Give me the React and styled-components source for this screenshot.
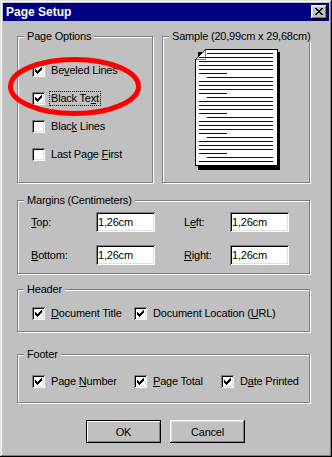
import React from 'react';
import styled, { createGlobalStyle } from 'styled-components';

const Global = createGlobalStyle`
  html, body { margin: 0; padding: 0; background: #c0c0c0; }
  body {
    font-family: "Liberation Sans", Arial, sans-serif;
    font-size: 11px;
    letter-spacing: -0.2px;
    color: #000;
  }
  * { box-sizing: border-box; }
`;

const Window = styled.div`
  position: relative;
  width: 332px;
  height: 457px;
  background: #c0c0c0;
  padding: 3px;
  display: flex;
  flex-direction: column;
  box-shadow: inset -1px -1px #000, inset 1px 1px #dfdfdf,
    inset -2px -2px #808080, inset 2px 2px #fff;
`;

const TitleBar = styled.div`
  flex: none;
  height: 18px;
  background: #000080;
  color: #fff;
  display: flex;
  align-items: center;
  justify-content: space-between;
  padding: 0 2px 0 3px;
`;

const TitleText = styled.span`
  font-weight: bold;
  font-size: 12px;
  letter-spacing: 0;
`;

const CloseButton = styled.div`
  width: 16px;
  height: 14px;
  background: #c0c0c0;
  display: flex;
  align-items: flex-start;
  justify-content: flex-start;
  padding: 3px 0 0 4px;
  box-shadow: inset -1px -1px #000, inset 1px 1px #fff,
    inset -2px -2px #808080, inset 2px 2px #dfdfdf;
`;

const Content = styled.div`
  flex: none;
  display: flex;
  flex-direction: column;
  padding: 15px 19px 0 14px;
`;

const TopRow = styled.div`
  display: flex;
  gap: 9px;
`;

const Group = styled.div`
  position: relative;
  flex: ${(p) => (p.$grow ? '1 1 0' : 'none')};
  border: 1px solid #808080;
  box-shadow: inset 1px 1px #fff, 1px 1px #fff;
  height: ${(p) => p.$h}px;
  width: ${(p) => (p.$w ? `${p.$w}px` : 'auto')};
  margin-top: ${(p) => p.$mt || 0}px;
`;

const Legend = styled.span`
  position: absolute;
  top: -7px;
  left: 6px;
  padding: 0 3px;
  line-height: 13px;
  background: #c0c0c0;
  white-space: nowrap;
`;

const OptionList = styled.div`
  display: flex;
  flex-direction: column;
  gap: 13px;
  padding: 26px 0 0 14px;
`;

const CheckRow = styled.div`
  display: flex;
  align-items: center;
  gap: 4px;
  height: 15px;
`;

const Box = styled.span`
  flex: none;
  width: 13px;
  height: 13px;
  background: #fff;
  display: flex;
  align-items: center;
  justify-content: center;
  box-shadow: inset 1px 1px #808080, inset -1px -1px #fff,
    inset 2px 2px #000, inset -2px -2px #dfdfdf;
`;

const Label = styled.span`
  line-height: 13px;
  padding: 0 1px;
  border: 1px dotted ${(p) => (p.$focus ? '#000' : 'transparent')};
  white-space: nowrap;
`;

const Acc = styled.span`
  text-decoration: underline;
  text-underline-offset: 1px;
`;

const SampleArea = styled.div`
  display: flex;
  justify-content: center;
  padding: 12px 0 0 4px;
`;

const MarginGrid = styled.div`
  display: grid;
  grid-template-columns: 65px 59px 29px 46px 59px;
  grid-auto-rows: 20px;
  row-gap: 13px;
  align-items: center;
  padding: 11px 0 0 13px;
`;

const FieldLabel = styled.span`
  grid-column: ${(p) => p.$col};
  white-space: nowrap;
`;

const Field = styled.input`
  grid-column: ${(p) => p.$col};
  width: 59px;
  height: 20px;
  border: none;
  outline: none;
  margin: 0;
  padding: 0 0 0 2px;
  background: #fff;
  font: inherit;
  letter-spacing: inherit;
  color: #000;
  box-shadow: inset 1px 1px #808080, inset -1px -1px #fff,
    inset 2px 2px #000, inset -2px -2px #dfdfdf;
`;

const CheckGrid = styled.div`
  display: grid;
  grid-template-columns: 102px 87px auto;
  padding: ${(p) => p.$pt}px 0 0 14px;
`;

const ButtonRow = styled.div`
  display: flex;
  justify-content: center;
  gap: 9px;
  padding-left: 4px;
  margin-top: 17px;
`;

const Button = styled.div`
  width: 75px;
  height: 23px;
  display: flex;
  align-items: center;
  justify-content: center;
  background: #c0c0c0;
  border: ${(p) => (p.$default ? '1px solid #000' : 'none')};
  box-shadow: ${(p) =>
    p.$default
      ? 'inset 1px 1px #fff, inset -1px -1px #808080'
      : 'inset -1px -1px #000, inset 1px 1px #fff, inset -2px -2px #808080, inset 2px 2px #dfdfdf'};
`;

const Ellipse = styled.svg`
  position: absolute;
  left: 8px;
  top: 57px;
  pointer-events: none;
`;

const XGlyph = () => {
  const rows = ['11000011', '01100110', '00111100', '00011000', '00111100', '01100110', '11000011'];
  return (
    <svg width="8" height="7" viewBox="0 0 8 7" shapeRendering="crispEdges">
      {rows.map((r, y) =>
        r.split('').map((c, x) => (c === '1' ? <rect key={`${x}-${y}`} x={x} y={y} width="1" height="1" fill="#000" /> : null))
      )}
    </svg>
  );
};

const CheckMark = () => {
  const rows = ['0000001', '0000011', '1000111', '1101110', '1111100', '0111000', '0010000'];
  return (
    <svg width="7" height="7" viewBox="0 0 7 7" shapeRendering="crispEdges">
      {rows.map((r, y) =>
        r.split('').map((c, x) => (c === '1' ? <rect key={`${x}-${y}`} x={x} y={y} width="1" height="1" fill="#000" /> : null))
      )}
    </svg>
  );
};

const Check = ({ checked, focus, children }) => (
  <CheckRow>
    <Box>{checked && <CheckMark />}</Box>
    <Label $focus={focus}>{children}</Label>
  </CheckRow>
);

const SamplePage = () => {
  const lines = [];
  for (let k = 0; k < 28; k++) {
    const y = 4 + 4 * k;
    let x1 = 4;
    let x2 = 77;
    if (k === 0 || (k > 1 && (k - 1) % 5 === 0)) x1 = 12;
    if (k > 0 && k % 5 === 0) x2 = 31;
    lines.push(<rect key={k} x={x1} y={y} width={x2 - x1 + 1} height="1" fill="#000080" />);
  }
  return (
    <svg width="86" height="121" viewBox="0 0 86 121" shapeRendering="crispEdges">
      <rect x="3" y="3" width="82" height="118" fill="#000" />
      <path d="M10.5 0.5 H82.5 V116.5 H0.5 V10.5 Z" fill="#fff" stroke="#000" />
      <path d="M0.5 10.5 H10.5 V0.5" fill="none" stroke="#808080" />
      {lines}
    </svg>
  );
};

export default function App() {
  return (
    <>
      <Global />
      <Window>
        <TitleBar>
          <TitleText>Page Setup</TitleText>
          <CloseButton>
            <XGlyph />
          </CloseButton>
        </TitleBar>
        <Content>
          <TopRow>
            <Group $w={136} $h={147}>
              <Legend>Page Options</Legend>
              <OptionList>
                <Check checked>
                  Be<Acc>v</Acc>eled Lines
                </Check>
                <Check checked focus>
                  Black Te<Acc>x</Acc>t
                </Check>
                <Check>
                  Blac<Acc>k</Acc> Lines
                </Check>
                <Check>
                  Last Page <Acc>F</Acc>irst
                </Check>
              </OptionList>
            </Group>
            <Group $grow $h={147}>
              <Legend>Sample (20,99cm x 29,68cm)</Legend>
              <SampleArea>
                <SamplePage />
              </SampleArea>
            </Group>
          </TopRow>

          <Group $h={74} $mt={17}>
            <Legend>Margins (Centimeters)</Legend>
            <MarginGrid>
              <FieldLabel $col={1}>
                <Acc>T</Acc>op:
              </FieldLabel>
              <Field $col={2} readOnly value="1,26cm" />
              <FieldLabel $col={4}>
                L<Acc>e</Acc>ft:
              </FieldLabel>
              <Field $col={5} readOnly value="1,26cm" />
              <FieldLabel $col={1}>
                <Acc>B</Acc>ottom:
              </FieldLabel>
              <Field $col={2} readOnly value="1,26cm" />
              <FieldLabel $col={4}>
                <Acc>R</Acc>ight:
              </FieldLabel>
              <Field $col={5} readOnly value="1,26cm" />
            </MarginGrid>
          </Group>

          <Group $h={43} $mt={15}>
            <Legend>Header</Legend>
            <CheckGrid $pt={16}>
              <Check checked>
                <Acc>D</Acc>ocument Title
              </Check>
              <Check checked>
                Document Location (<Acc>U</Acc>RL)
              </Check>
            </CheckGrid>
          </Group>

          <Group $h={49} $mt={22}>
            <Legend>Footer</Legend>
            <CheckGrid $pt={19}>
              <Check checked>
                Page <Acc>N</Acc>umber
              </Check>
              <Check checked>
                <Acc>P</Acc>age Total
              </Check>
              <Check checked>
                D<Acc>a</Acc>te Printed
              </Check>
            </CheckGrid>
          </Group>

          <ButtonRow>
            <Button $default>OK</Button>
            <Button>Cancel</Button>
          </ButtonRow>
        </Content>

        <Ellipse width="133" height="59" viewBox="0 0 133 59">
          <ellipse cx="66.5" cy="29.5" rx="64" ry="27" fill="none" stroke="#ff0000" strokeWidth="5" />
        </Ellipse>
      </Window>
    </>
  );
}
